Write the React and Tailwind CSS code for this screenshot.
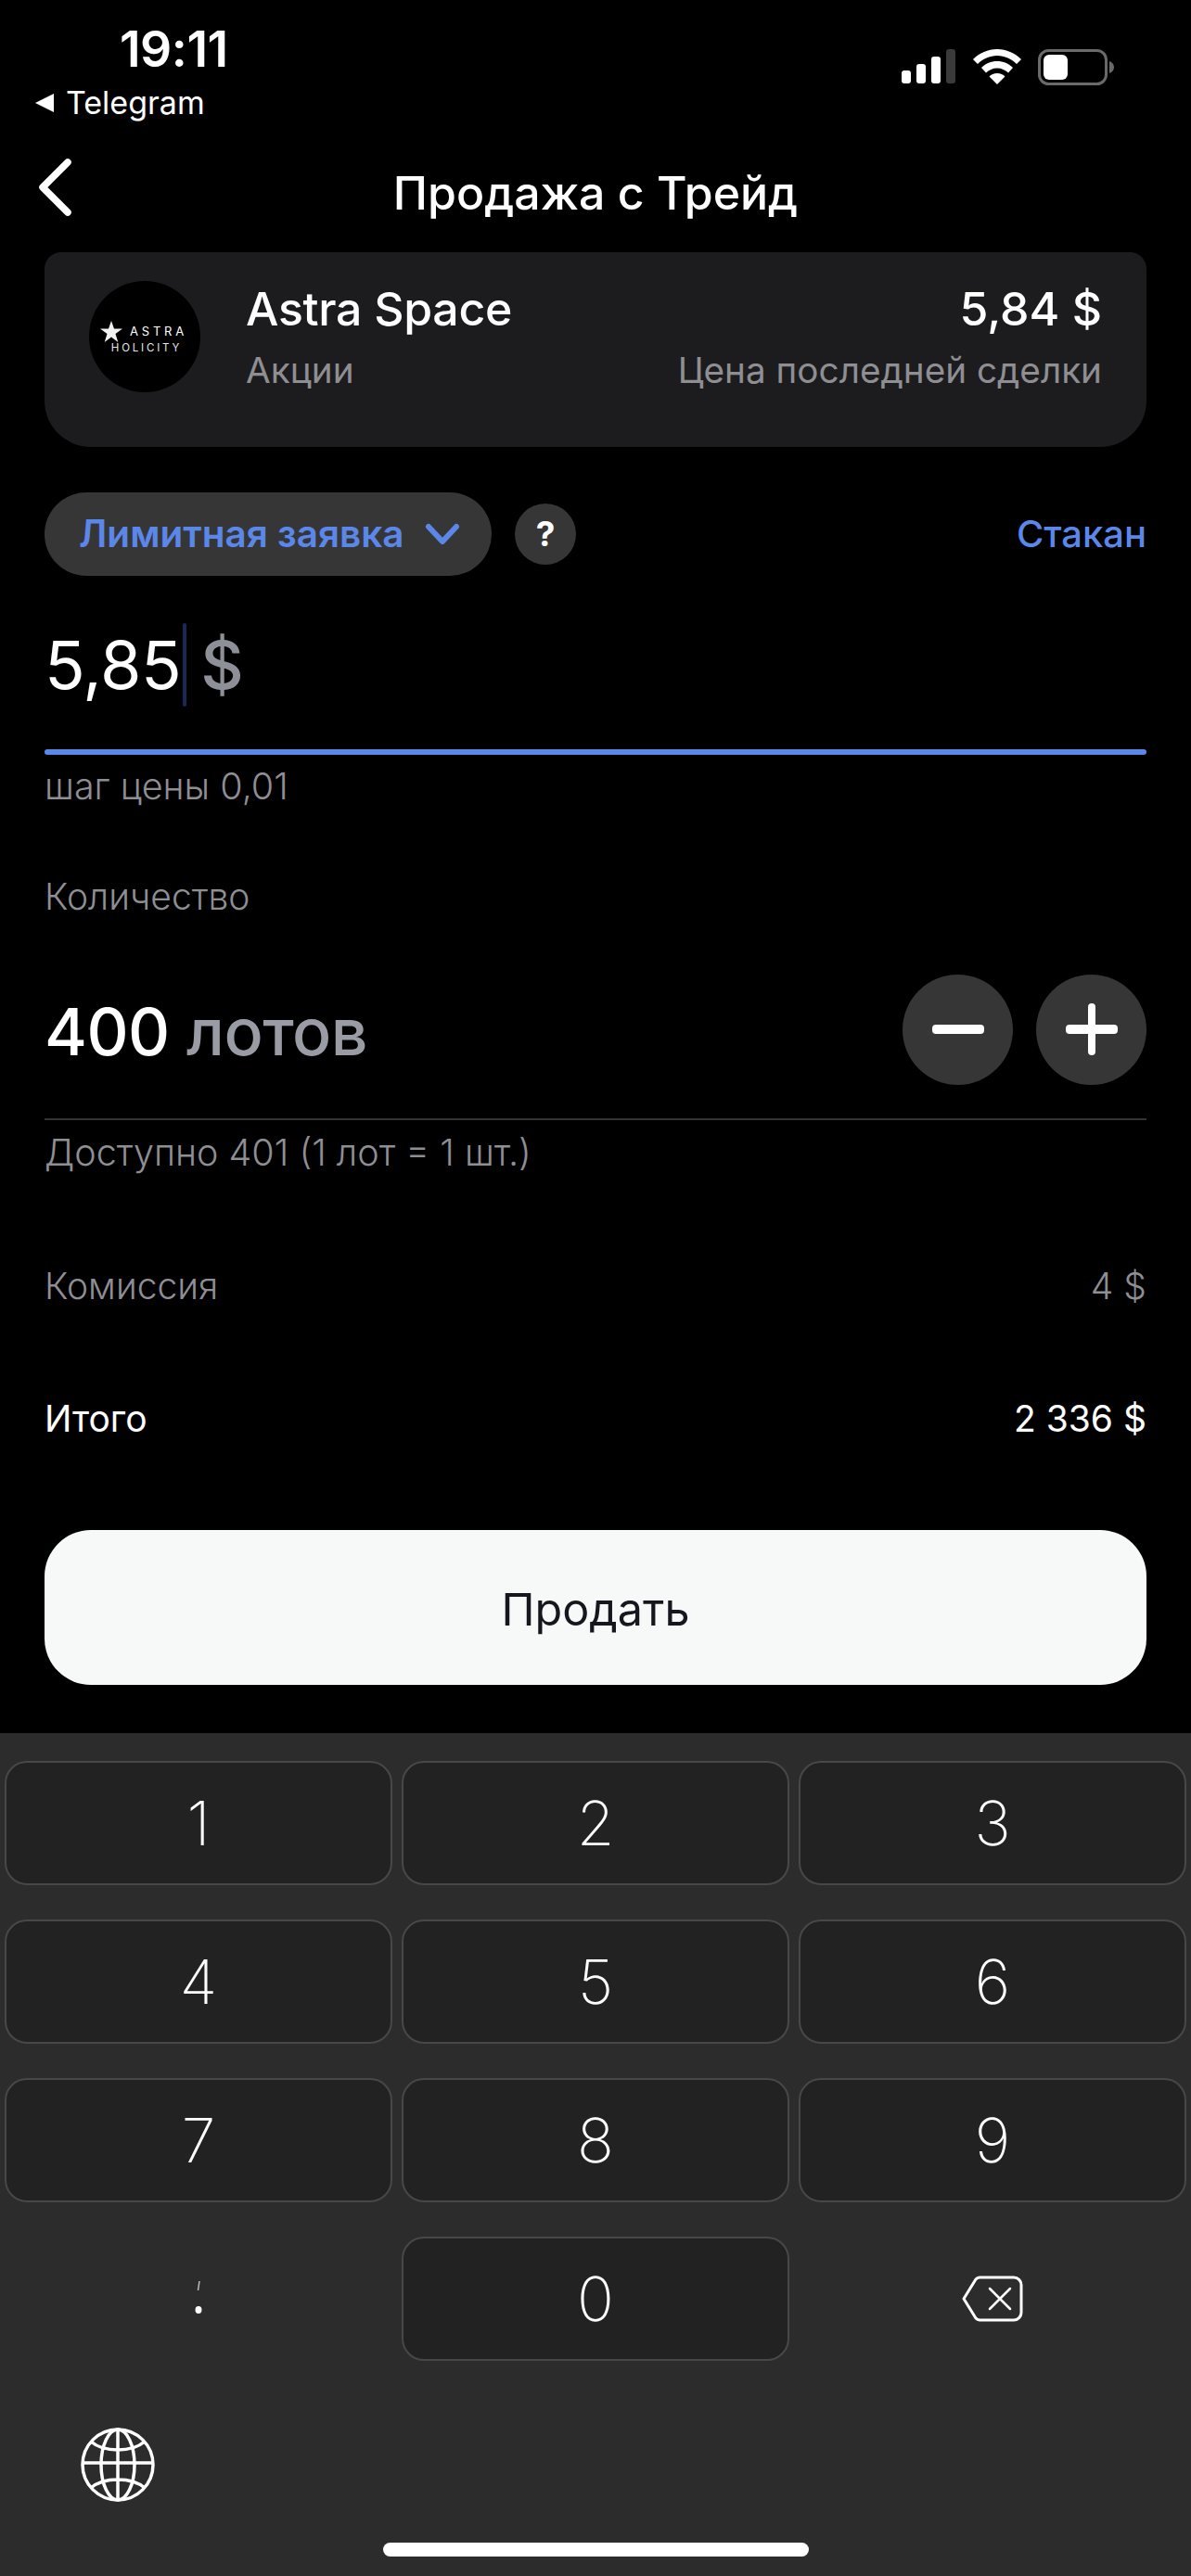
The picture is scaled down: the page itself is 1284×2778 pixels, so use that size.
import React from "react";

const F = { fontFamily: '"Inter","Noto Sans",sans-serif' };

function Key({ children }) {
  return (
    <div className="h-[134px] rounded-[24px] border-2 border-[#484848] bg-[#222222] flex items-center justify-center text-[66px] font-[250] leading-none text-white">
      {children}
    </div>
  );
}

function Signal() {
  return (
    <svg width="58" height="38" viewBox="0 0 58 38">
      <rect x="0" y="23" width="10" height="14" rx="3" fill="#fff" />
      <rect x="16" y="16" width="10" height="21" rx="3" fill="#fff" />
      <rect x="32" y="8" width="10" height="29" rx="3" fill="#fff" />
      <rect x="48" y="0" width="10" height="37" rx="3" fill="#3a3a3a" />
    </svg>
  );
}

function Wifi() {
  return (
    <svg width="52" height="38" viewBox="0 0 52 38" fill="#fff">
      <path d="M26 0C16 0 7 4 0 11l5 5c5.500-5.500 13-9 21-9s15.500 3.500 21 9l5-5C45 4 36 0 26 0z" />
      <path d="M26 13c-6.500 0-12.500 2.500-17 7l5 5.500c3-3 7.500-5 12-5s9 2 12 5l5-5.500c-4.500-4.500-10.500-7-17-7z" />
      <path d="M26 26c-3.500 0-6.500 1.300-8.500 3.500L26 38l8.500-8.500C32.500 27.300 29.500 26 26 26z" />
    </svg>
  );
}

function Battery() {
  return (
    <svg width="84" height="40" viewBox="0 0 84 40">
      <rect x="1.500" y="1.500" width="72" height="36" rx="10" fill="none" stroke="#6a6a6a" strokeWidth="3" />
      <rect x="6" y="6" width="26" height="27" rx="6" fill="#fff" />
      <path d="M77 13c3 1 5 3.500 5 6.500S80 25 77 26z" fill="#6a6a6a" />
    </svg>
  );
}

function Globe() {
  return (
    <svg width="80" height="80" viewBox="0 0 80 80" fill="none" stroke="#fff" strokeWidth="3.500">
      <circle cx="40" cy="40" r="38" />
      <ellipse cx="40" cy="40" rx="18" ry="38" />
      <path d="M40 2v76M2 38h76M11 15c7 6 17 9 29 9s22-3 29-9M11 65c7-6 17-9 29-9s22 3 29 9" />
    </svg>
  );
}

function Backspace() {
  return (
    <svg width="66" height="50" viewBox="0 0 66 50" fill="none" stroke="#fff">
      <path d="M19 2h37a8 8 0 0 1 8 8v30a8 8 0 0 1-8 8H19a6 6 0 0 1-4-2L2 25 15 4a6 6 0 0 1 4-2z" strokeWidth="3" strokeLinejoin="round" />
      <path d="M30 14l22 22M52 14L30 36" strokeWidth="2.500" strokeLinecap="round" />
    </svg>
  );
}

export default function App() {
  return (
    <div style={F} className="w-[1284px] h-[2778px] bg-black text-white flex flex-col overflow-hidden">
      {/* status bar */}
      <div className="h-[155px] flex justify-between shrink-0">
        <div className="flex flex-col">
          <div className="ml-[129px] mt-[23px] text-[53.500px] leading-[60px] font-semibold tracking-[-0.5px]">19:11</div>
          <div className="flex items-center ml-[37px] mt-[8px] gap-[13px]">
            <svg width="21" height="20" viewBox="0 0 21 20"><path d="M21 0v20L1 10z" fill="#fff" /></svg>
            <span className="text-[34px] leading-[40px]">Telegram</span>
          </div>
        </div>
        <div className="flex items-start mt-[53px] mr-[81px]">
          <Signal />
          <div className="ml-[19px]"><Wifi /></div>
          <div className="ml-[18px]"><Battery /></div>
        </div>
      </div>

      {/* header */}
      <div className="h-[105px] shrink-0 relative flex items-center justify-center">
        <svg className="absolute left-[40px] top-[16px]" width="38" height="62" viewBox="0 0 38 62" fill="none">
          <path d="M33 4L6 31l27 27" stroke="#fff" strokeWidth="7.500" strokeLinecap="round" strokeLinejoin="round" />
        </svg>
        <span className="text-[50px] font-medium leading-[60px]">Продажа с Трейд</span>
      </div>

      <div className="h-[12px] shrink-0" />

      {/* card */}
      <div className="mx-[48px] h-[210px] shrink-0 bg-[#1c1c1e] rounded-t-[18px] rounded-b-[50px] px-[48px] pt-[31px] flex items-start">
        <div className="w-[120px] h-[120px] rounded-full bg-black flex flex-col items-center justify-center shrink-0">
          <div className="flex items-center gap-[8px] -ml-[2px]">
            <svg width="24" height="23" viewBox="0 0 24 23"><path d="M12 0l3 8.500h9l-7.500 5.500 2.800 9L12 17.500 4.700 23l2.800-9L0 8.500h9z" fill="#f2f2f2" /></svg>
            <span className="text-[13px] leading-[14px] tracking-[3.800px] text-white">ASTRA</span>
          </div>
          <span className="text-[11.500px] leading-[12px] tracking-[2.800px] text-[#e6e6e6] ml-[4px]">HOLICITY</span>
        </div>
        <div className="ml-[49px] -mt-[2px] flex-1 flex flex-col">
          <div className="flex justify-between items-center h-[64px]">
            <span className="text-[50px] font-medium leading-[60px] tracking-[-0.3px]">Astra Space</span>
            <span className="text-[50px] font-medium leading-[60px]">5,84 $</span>
          </div>
          <div className="flex justify-between items-center mt-[2px] h-[64px] text-[38.700px] leading-[44px] text-[#8e8e93]">
            <span>Акции</span>
            <span>Цена последней сделки</span>
          </div>
        </div>
      </div>

      {/* order type */}
      <div className="mx-[48px] mt-[49px] flex items-center shrink-0 h-[90px]">
        <div className="h-[90px] w-[482px] rounded-full bg-[#363636] flex items-center pl-[37px] text-[#5b87e8] text-[40.500px] font-semibold">
          <span>Лимитная заявка</span>
          <svg className="ml-[22px]" width="38" height="26" viewBox="0 0 38 26" fill="none">
            <path d="M4 5l15 16L34 5" stroke="#5b87e8" strokeWidth="6" strokeLinecap="round" strokeLinejoin="round" />
          </svg>
        </div>
        <div className="ml-[25px] w-[66px] h-[66px] rounded-full bg-[#363636] flex items-center justify-center text-[37px] font-bold">?</div>
        <span className="ml-auto text-[40px] font-medium text-[#5b87e8]">Стакан</span>
      </div>

      {/* price */}
      <div className="mx-[48px] mt-[51px] h-[90px] shrink-0 flex items-center">
        <span className="text-[72px] leading-[90px] tracking-[-0.5px]">5,85</span>
        <div className="w-[4px] h-[90px] bg-[#1a2a55] ml-[2px] rounded-full" />
        <span className="text-[72px] leading-[90px] font-medium text-[#8e9099] ml-[15px]">$</span>
      </div>
      <div className="mx-[48px] mt-[46px] h-[6px] rounded-full bg-[#5b87e8] shrink-0" />
      <div className="mx-[48px] mt-[12px] text-[39.500px] leading-[44px] text-[#8e8e93] font-light shrink-0">шаг цены 0,01</div>
      <div className="mx-[48px] mt-[75px] text-[39px] leading-[44px] text-[#8e8e93] font-light shrink-0">Количество</div>

      {/* amount */}
      <div className="mx-[48px] mt-[61px] h-[120px] shrink-0 flex items-center justify-between">
        <div className="pt-[6px] text-[70px] leading-[90px] font-medium tracking-[-0.5px]">
          <span>400 </span>
          <span className="text-[#9a9ca5]">лотов</span>
        </div>
        <div className="flex gap-[25px]">
          <div className="w-[119px] h-[119px] rounded-full bg-[#363636] flex items-center justify-center">
            <svg width="56" height="10" viewBox="0 0 56 10"><rect width="56" height="10" rx="4" fill="#fff" /></svg>
          </div>
          <div className="w-[119px] h-[119px] rounded-full bg-[#363636] flex items-center justify-center">
            <svg width="56" height="56" viewBox="0 0 56 56"><rect y="23" width="56" height="10" rx="4" fill="#fff" /><rect x="24" width="8" height="56" rx="4" fill="#fff" /></svg>
          </div>
        </div>
      </div>
      <div className="mx-[48px] mt-[36px] h-[2px] bg-[#333336] shrink-0" />
      <div className="mx-[48px] mt-[13px] text-[39.500px] leading-[44px] text-[#8e8e93] font-light shrink-0">Доступно 401 (1 лот = 1 шт.)</div>

      <div className="mx-[48px] mt-[100px] flex justify-between text-[39px] leading-[44px] text-[#8e8e93] font-light shrink-0">
        <span>Комиссия</span>
        <span>4 $</span>
      </div>
      <div className="mx-[48px] mt-[99px] flex justify-between text-[39px] leading-[44px] text-white shrink-0">
        <span>Итого</span>
        <span>2 336 $</span>
      </div>

      {/* submit */}
      <div className="mx-[48px] mt-[98px] h-[167px] rounded-[50px] bg-[#f7f9f9] flex items-center justify-center pt-[5px] text-[48.500px] text-[#16161e] shrink-0">
        Продать
      </div>

      {/* keyboard */}
      <div className="mt-[52px] flex-1 bg-[#2c2c2c] flex flex-col px-[5px] pt-[30px]">
        <div className="grid grid-cols-3 gap-x-[10px] gap-y-[37px]">
          {["1", "2", "3", "4", "5", "6", "7", "8", "9"].map((n) => (
            <Key key={n}>{n}</Key>
          ))}
          <div className="h-[134px] flex items-center justify-center">
            <svg width="10" height="38" viewBox="0 0 10 38">
              <path d="M6 0L4.500 10" stroke="#bdbdbd" strokeWidth="1.500" />
              <ellipse cx="5" cy="31" rx="3.500" ry="4" fill="#fff" />
            </svg>
          </div>
          <Key>0</Key>
          <div className="h-[134px] flex items-center justify-center">
            <Backspace />
          </div>
        </div>
        <div className="ml-[82px] mt-[72px]">
          <Globe />
        </div>
        <div className="mt-[44px] ml-[408px] w-[459px] h-[15px] rounded-full bg-white" />
      </div>
    </div>
  );
}
